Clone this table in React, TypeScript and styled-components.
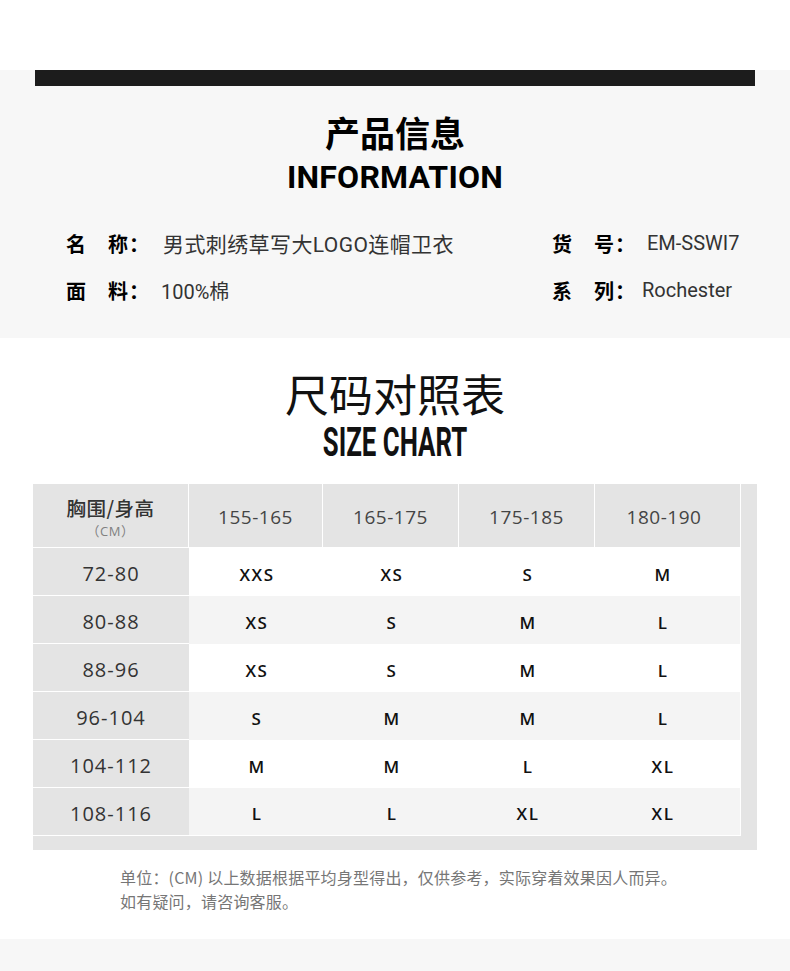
import React from 'react';
import styled, { createGlobalStyle } from 'styled-components';

const GlobalStyle = createGlobalStyle`
    body {
        margin: 0;
        background: #ffffff;
        font-family: 'Noto Sans CJK SC', sans-serif;
    }
`;

const Page = styled.div`
    width: 790px;
    padding-top: 70px;
`;

const InfoSection = styled.section`
    background: #f7f7f7;
    padding: 0 35px 34px;
`;

const TopBar = styled.div`
    height: 16px;
    background: #1c1c1c;
`;

const InfoTitle = styled.h1`
    margin: 28px 0 0;
    font-family: 'Noto Sans CJK SC', sans-serif;
    font-size: 35px;
    line-height: 35px;
    font-weight: 700;
    color: #000;
    text-align: center;
`;

const InfoSubtitle = styled.h2`
    margin: 12px 0 0;
    font-family: Roboto, 'Noto Sans CJK SC', sans-serif;
    font-size: 32px;
    line-height: 32px;
    font-weight: 700;
    color: #000;
    text-align: center;
    letter-spacing: 0.2px;
`;

const InfoGrid = styled.div`
    margin-top: 36px;
    padding-left: 31px;
    display: grid;
    grid-template-columns: 486px auto;
    row-gap: 19px;
`;

const InfoItem = styled.div`
    display: flex;
    align-items: center;
    height: 28px;
`;

const InfoLabel = styled.span<{ $width: number }>`
    width: ${(p) => p.$width}px;
    flex-shrink: 0;
    font-family: 'Noto Sans CJK SC', sans-serif;
    font-size: 20px;
    font-weight: 700;
    color: #000;
    letter-spacing: 1px;
    white-space: pre;
`;

const InfoValue = styled.span<{ $wide?: boolean }>`
    font-family: Roboto, 'Noto Sans CJK SC', sans-serif;
    font-size: ${(p) => (p.$wide ? 21 : 20)}px;
    letter-spacing: ${(p) => (p.$wide ? 0.4 : 0)}px;
    color: #333;
    white-space: nowrap;
`;

const SizeSection = styled.section`
    padding: 33px 33px 0;
`;

const SizeTitle = styled.h1`
    margin: 0;
    font-family: 'Noto Sans CJK SC', sans-serif;
    font-size: 44px;
    line-height: 44px;
    font-weight: 400;
    color: #111;
    text-align: center;
`;

const SizeSubtitleRow = styled.div`
    margin-top: 8px;
    height: 40px;
    display: flex;
    justify-content: center;
`;

const SizeSubtitle = styled.span`
    display: inline-block;
    font-family: Roboto, sans-serif;
    font-size: 40px;
    line-height: 40px;
    font-weight: 700;
    color: #111;
    transform: scaleX(0.645);
    white-space: nowrap;
`;

const TableFrame = styled.div`
    margin-top: 21px;
    background: #e4e4e4;
    padding: 0 16px 14px 0;
`;

const Table = styled.div`
    display: grid;
    grid-template-columns: 156px 134px 136px 136px 1fr;
    font-family: 'Open Sans', 'Noto Sans CJK SC', sans-serif;
`;

const HeadCell = styled.div<{ $edge?: boolean }>`
    height: 64px;
    box-sizing: border-box;
    padding: 2px ${(p) => (p.$edge ? 7 : 0)}px 0 0;
    background: #e4e4e4;
    border-right: 1px solid #fff;
    border-bottom: 1px solid #fff;
    display: flex;
    flex-direction: column;
    align-items: center;
    justify-content: center;
    font-size: 19px;
    letter-spacing: 0.5px;
    color: #444;
`;

const HeadMain = styled.span`
    font-family: 'Noto Sans CJK SC', sans-serif;
    font-size: 19.5px;
    line-height: 29px;
    font-weight: 500;
    letter-spacing: 0.5px;
    color: #333;
`;

const HeadUnit = styled.span`
    font-size: 13px;
    line-height: 18px;
    letter-spacing: 0.5px;
    color: #808080;
`;

const RowHead = styled.div`
    height: 48px;
    box-sizing: border-box;
    padding-top: 3px;
    background: #e4e4e4;
    border-bottom: 1px solid #fff;
    display: flex;
    align-items: center;
    justify-content: center;
    font-size: 20px;
    letter-spacing: 1px;
    color: #333;
`;

const SizeCell = styled.div<{ $shade: boolean; $edge: boolean; $last: boolean }>`
    height: 48px;
    box-sizing: border-box;
    padding: 4px ${(p) => (p.$edge ? 11 : 0)}px 0 2px;
    background: ${(p) => (p.$shade ? '#f4f4f4' : '#ffffff')};
    border-right: ${(p) => (p.$edge ? '1px solid #fff' : 'none')};
    border-bottom: ${(p) => (p.$last ? '1px solid #fff' : 'none')};
    display: flex;
    align-items: center;
    justify-content: center;
    font-size: 17px;
    font-weight: 600;
    letter-spacing: 1.5px;
    color: #111;
`;

const Note = styled.p`
    margin: 15px 0 0;
    padding-left: 87px;
    font-family: 'Noto Sans CJK SC', sans-serif;
    font-size: 16px;
    line-height: 24px;
    letter-spacing: 0.2px;
    color: #767676;
`;

const BottomBand = styled.div`
    margin-top: 26px;
    height: 40px;
    background: #f7f7f7;
`;

const heights = ['155-165', '165-175', '175-185', '180-190'];

const rows: { chest: string; sizes: string[] }[] = [
    { chest: '72-80', sizes: ['XXS', 'XS', 'S', 'M'] },
    { chest: '80-88', sizes: ['XS', 'S', 'M', 'L'] },
    { chest: '88-96', sizes: ['XS', 'S', 'M', 'L'] },
    { chest: '96-104', sizes: ['S', 'M', 'M', 'L'] },
    { chest: '104-112', sizes: ['M', 'M', 'L', 'XL'] },
    { chest: '108-116', sizes: ['L', 'L', 'XL', 'XL'] },
];

const App: React.FC = () => {
    return (
        <Page>
            <GlobalStyle />
            <InfoSection>
                <TopBar />
                <InfoTitle>产品信息</InfoTitle>
                <InfoSubtitle>INFORMATION</InfoSubtitle>
                <InfoGrid>
                    <InfoItem>
                        <InfoLabel $width={97}>名　称：</InfoLabel>
                        <InfoValue $wide>男式刺绣草写大LOGO连帽卫衣</InfoValue>
                    </InfoItem>
                    <InfoItem>
                        <InfoLabel $width={95}>货　号：</InfoLabel>
                        <InfoValue>EM-SSWI7</InfoValue>
                    </InfoItem>
                    <InfoItem>
                        <InfoLabel $width={95}>面　料：</InfoLabel>
                        <InfoValue>100%棉</InfoValue>
                    </InfoItem>
                    <InfoItem>
                        <InfoLabel $width={90}>系　列：</InfoLabel>
                        <InfoValue>Rochester</InfoValue>
                    </InfoItem>
                </InfoGrid>
            </InfoSection>

            <SizeSection>
                <SizeTitle>尺码对照表</SizeTitle>
                <SizeSubtitleRow>
                    <SizeSubtitle>SIZE CHART</SizeSubtitle>
                </SizeSubtitleRow>
                <TableFrame>
                    <Table>
                        <HeadCell>
                            <HeadMain>胸围/身高</HeadMain>
                            <HeadUnit>（CM）</HeadUnit>
                        </HeadCell>
                        {heights.map((h, j) => (
                            <HeadCell key={h} $edge={j === heights.length - 1}>
                                {h}
                            </HeadCell>
                        ))}
                        {rows.map((row, i) => (
                            <React.Fragment key={row.chest}>
                                <RowHead>{row.chest}</RowHead>
                                {row.sizes.map((s, j) => (
                                    <SizeCell
                                        key={j}
                                        $shade={i % 2 === 1}
                                        $edge={j === row.sizes.length - 1}
                                        $last={i === rows.length - 1}
                                    >
                                        {s}
                                    </SizeCell>
                                ))}
                            </React.Fragment>
                        ))}
                    </Table>
                </TableFrame>
                <Note>
                    单位：(CM) 以上数据根据平均身型得出，仅供参考，实际穿着效果因人而异。
                    <br />
                    如有疑问，请咨询客服。
                </Note>
            </SizeSection>
            <BottomBand />
        </Page>
    );
};

export default App;
